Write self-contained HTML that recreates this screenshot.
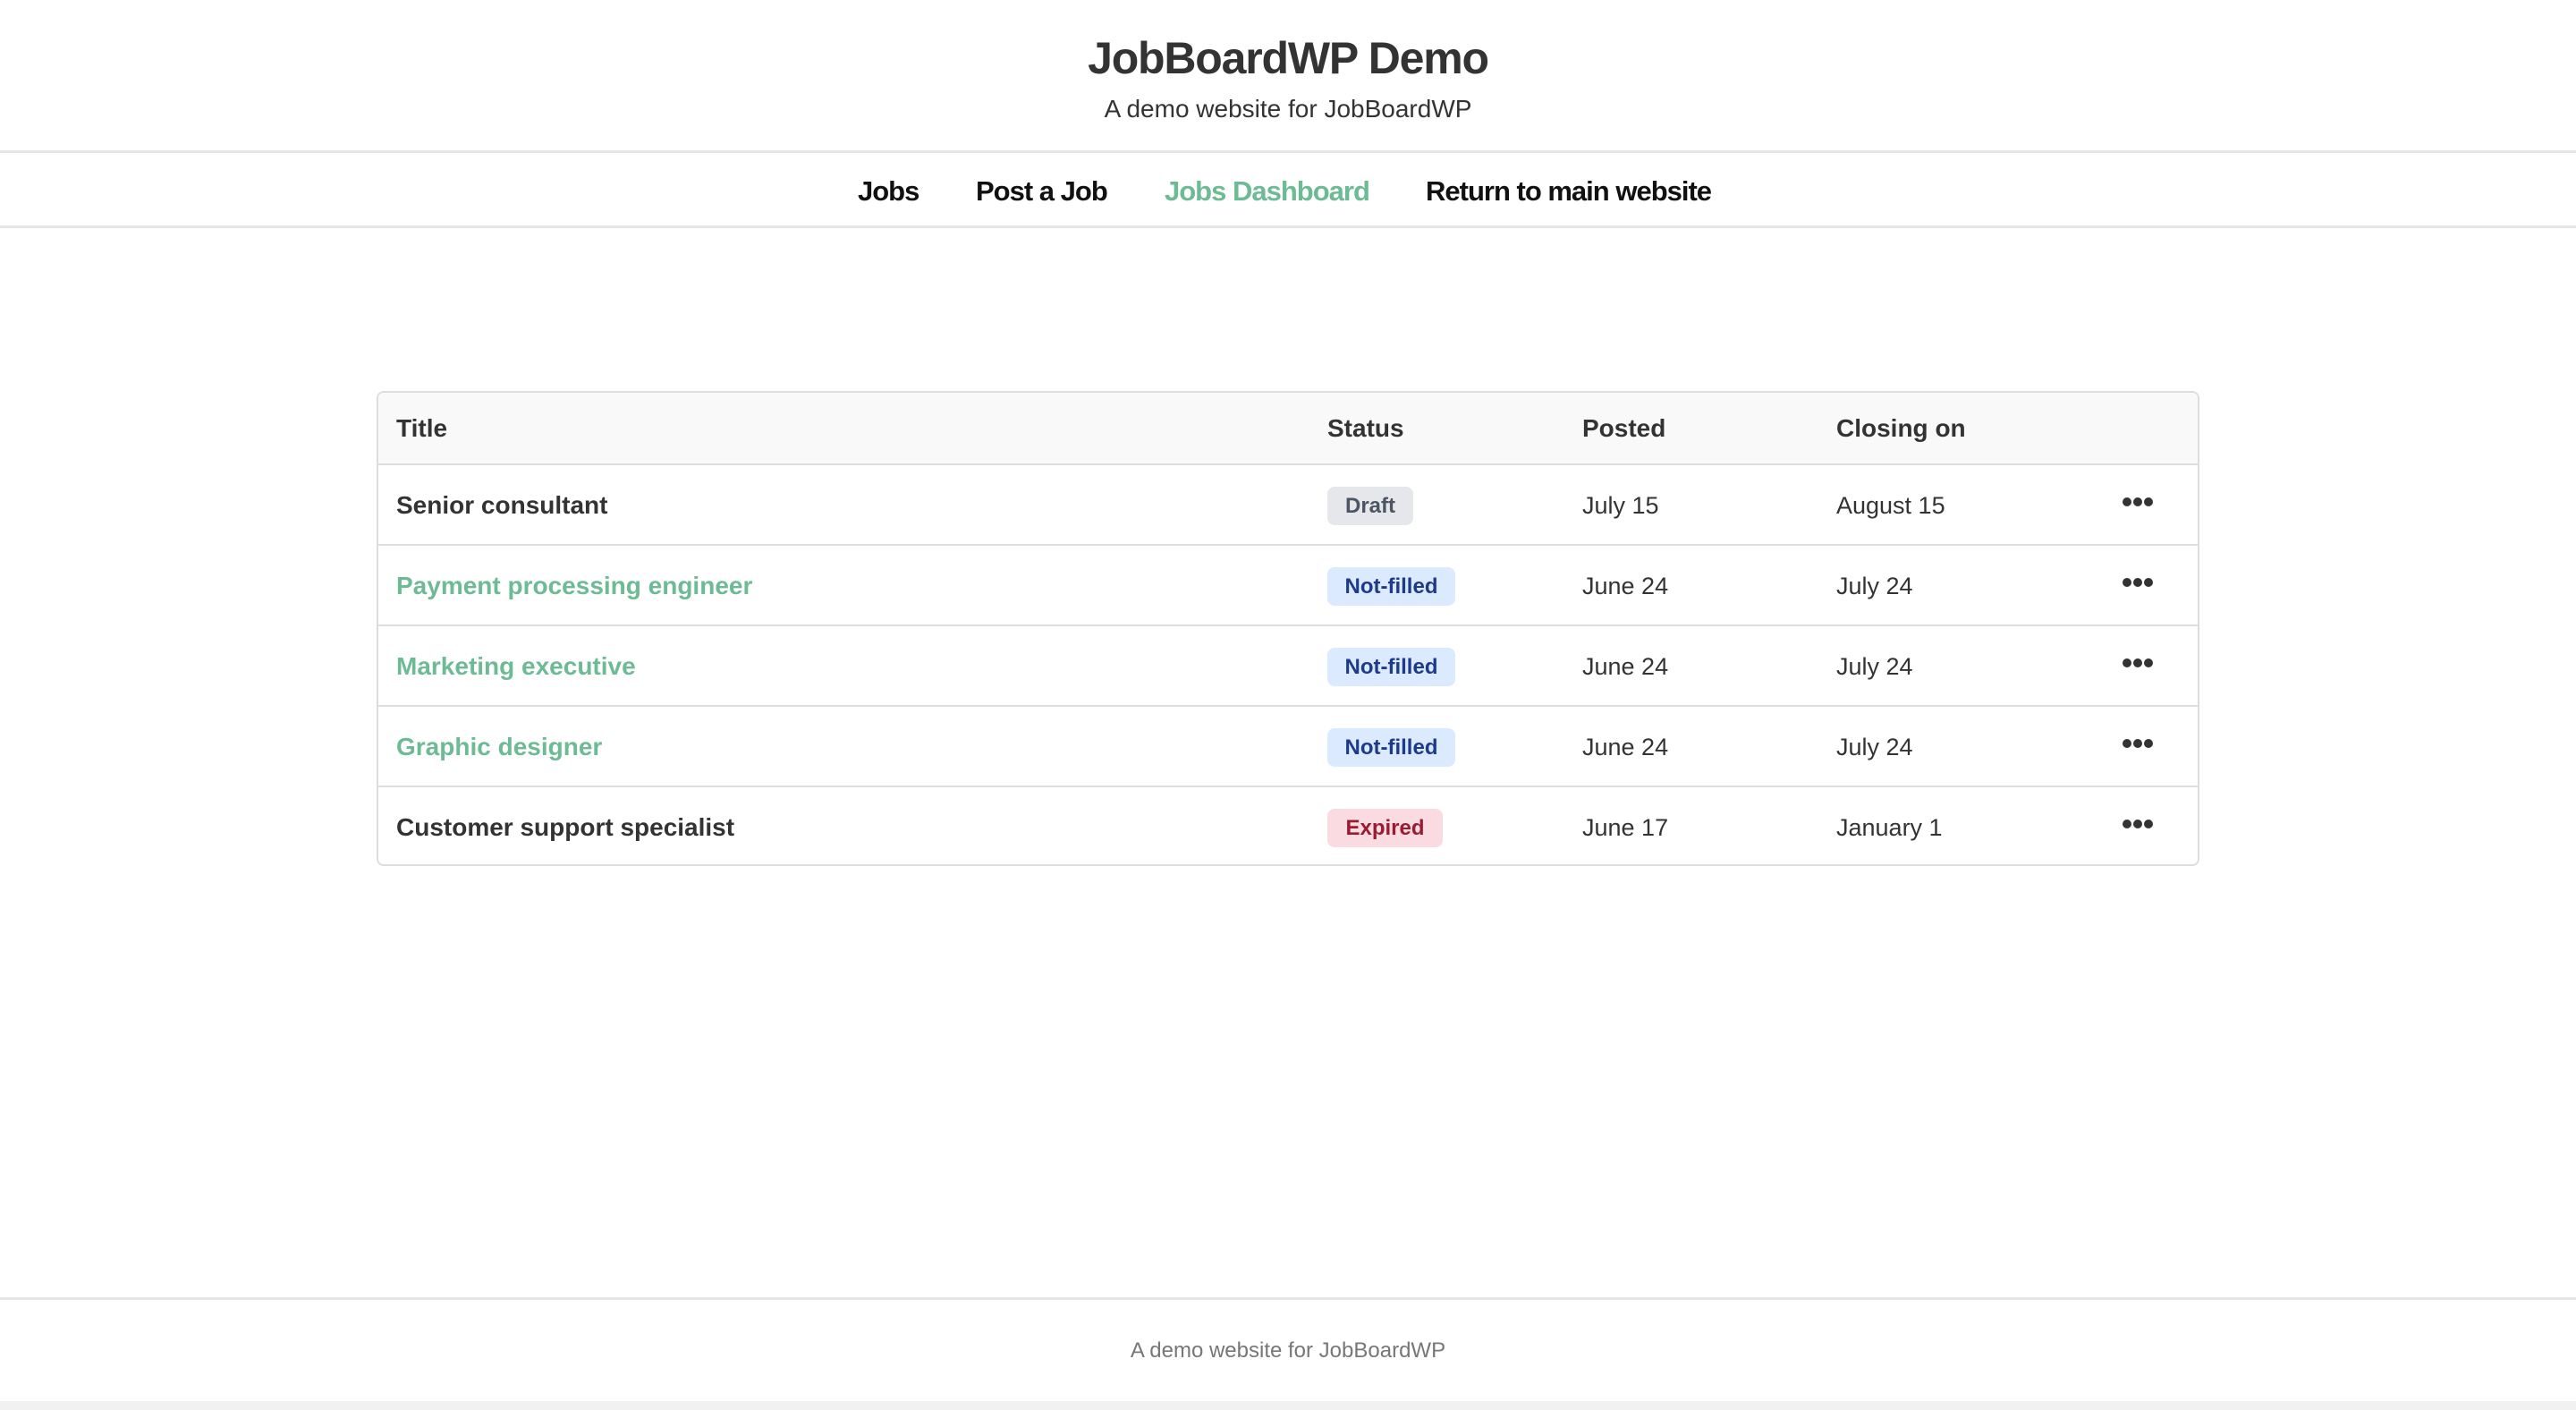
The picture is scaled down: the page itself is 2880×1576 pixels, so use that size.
<!DOCTYPE html>
<html><head><meta charset="utf-8">
<style>
*{margin:0;padding:0;box-sizing:border-box}
html,body{width:2880px;height:1576px;background:#fff;overflow:hidden;font-family:"Liberation Sans",sans-serif;color:#333}
.abs{position:absolute}
.title{left:0;width:2880px;top:36px;text-align:center;font-size:50px;font-weight:bold;color:#333;letter-spacing:-1.2px}
.sub{left:0;width:2880px;top:106px;text-align:center;font-size:28px;color:#333}
.hl{left:0;width:2880px;height:3px;background:#e6e6e6}
.nav{top:196px;font-size:31px;font-weight:bold;color:#111;letter-spacing:-1px;white-space:nowrap}
.tbl{left:421px;top:437px;width:2038px;height:531px;border:2px solid #ddd;border-radius:8px;overflow:hidden}
.head{position:absolute;left:0;top:0;width:100%;height:81px;background:#f9f9f9;border-bottom:2px solid #ddd}
.row{position:absolute;left:0;width:100%;height:90px;border-bottom:2px solid #ddd}
.c{position:absolute;font-size:27px;white-space:nowrap}
.h{font-weight:bold;font-size:28px;top:24px}
.t{font-weight:bold;top:29px;font-size:28px}
.g{color:#6dbb94}
.d{top:30px}
.b{position:absolute;left:1061px;top:24px;height:43px;border-radius:8px;font-weight:bold;font-size:24px;line-height:43px;text-align:center}
.dots{position:absolute;left:1950px;top:36px;width:34px;height:10px}
.dots i{position:absolute;top:0;width:10px;height:10px;border-radius:50%;background:#333}
</style></head><body>
<div class="abs title">JobBoardWP Demo</div>
<div class="abs sub">A demo website for JobBoardWP</div>
<div class="abs hl" style="top:168px"></div>
<div class="abs nav" style="left:959px">Jobs</div>
<div class="abs nav" style="left:1091px">Post a Job</div>
<div class="abs nav" style="left:1302px;color:#6dbb94">Jobs Dashboard</div>
<div class="abs nav" style="left:1594px">Return to main website</div>
<div class="abs hl" style="top:252px"></div>

<div class="abs tbl">
 <div class="head">
  <div class="c h" style="left:20px">Title</div>
  <div class="c h" style="left:1061px">Status</div>
  <div class="c h" style="left:1346px">Posted</div>
  <div class="c h" style="left:1630px">Closing on</div>
 </div>
 <div class="row" style="top:81px">
  <div class="c t" style="left:20px">Senior consultant</div>
  <div class="b" style="width:96px;background:#e5e7eb;color:#4b5563">Draft</div>
  <div class="c d" style="left:1346px">July 15</div>
  <div class="c d" style="left:1630px">August 15</div>
  <div class="dots"><i style="left:0"></i><i style="left:12px"></i><i style="left:24px"></i></div>
 </div>
 <div class="row" style="top:171px">
  <div class="c t g" style="left:20px">Payment processing engineer</div>
  <div class="b" style="width:143px;background:#dbeafe;color:#1e3a8a">Not-filled</div>
  <div class="c d" style="left:1346px">June 24</div>
  <div class="c d" style="left:1630px">July 24</div>
  <div class="dots"><i style="left:0"></i><i style="left:12px"></i><i style="left:24px"></i></div>
 </div>
 <div class="row" style="top:261px">
  <div class="c t g" style="left:20px">Marketing executive</div>
  <div class="b" style="width:143px;background:#dbeafe;color:#1e3a8a">Not-filled</div>
  <div class="c d" style="left:1346px">June 24</div>
  <div class="c d" style="left:1630px">July 24</div>
  <div class="dots"><i style="left:0"></i><i style="left:12px"></i><i style="left:24px"></i></div>
 </div>
 <div class="row" style="top:351px">
  <div class="c t g" style="left:20px">Graphic designer</div>
  <div class="b" style="width:143px;background:#dbeafe;color:#1e3a8a">Not-filled</div>
  <div class="c d" style="left:1346px">June 24</div>
  <div class="c d" style="left:1630px">July 24</div>
  <div class="dots"><i style="left:0"></i><i style="left:12px"></i><i style="left:24px"></i></div>
 </div>
 <div class="row" style="top:441px;border-bottom:none">
  <div class="c t" style="left:20px">Customer support specialist</div>
  <div class="b" style="width:129px;background:#fadbe2;color:#9b1c31">Expired</div>
  <div class="c d" style="left:1346px">June 17</div>
  <div class="c d" style="left:1630px">January 1</div>
  <div class="dots"><i style="left:0"></i><i style="left:12px"></i><i style="left:24px"></i></div>
 </div>
</div>

<div class="abs hl" style="top:1450px"></div>
<div class="abs" style="left:0;width:2880px;top:1496px;text-align:center;font-size:24px;color:#777">A demo website for JobBoardWP</div>
<div class="abs" style="left:0;top:1566px;width:2880px;height:10px;background:#f1f1f1"></div>
</body></html>
